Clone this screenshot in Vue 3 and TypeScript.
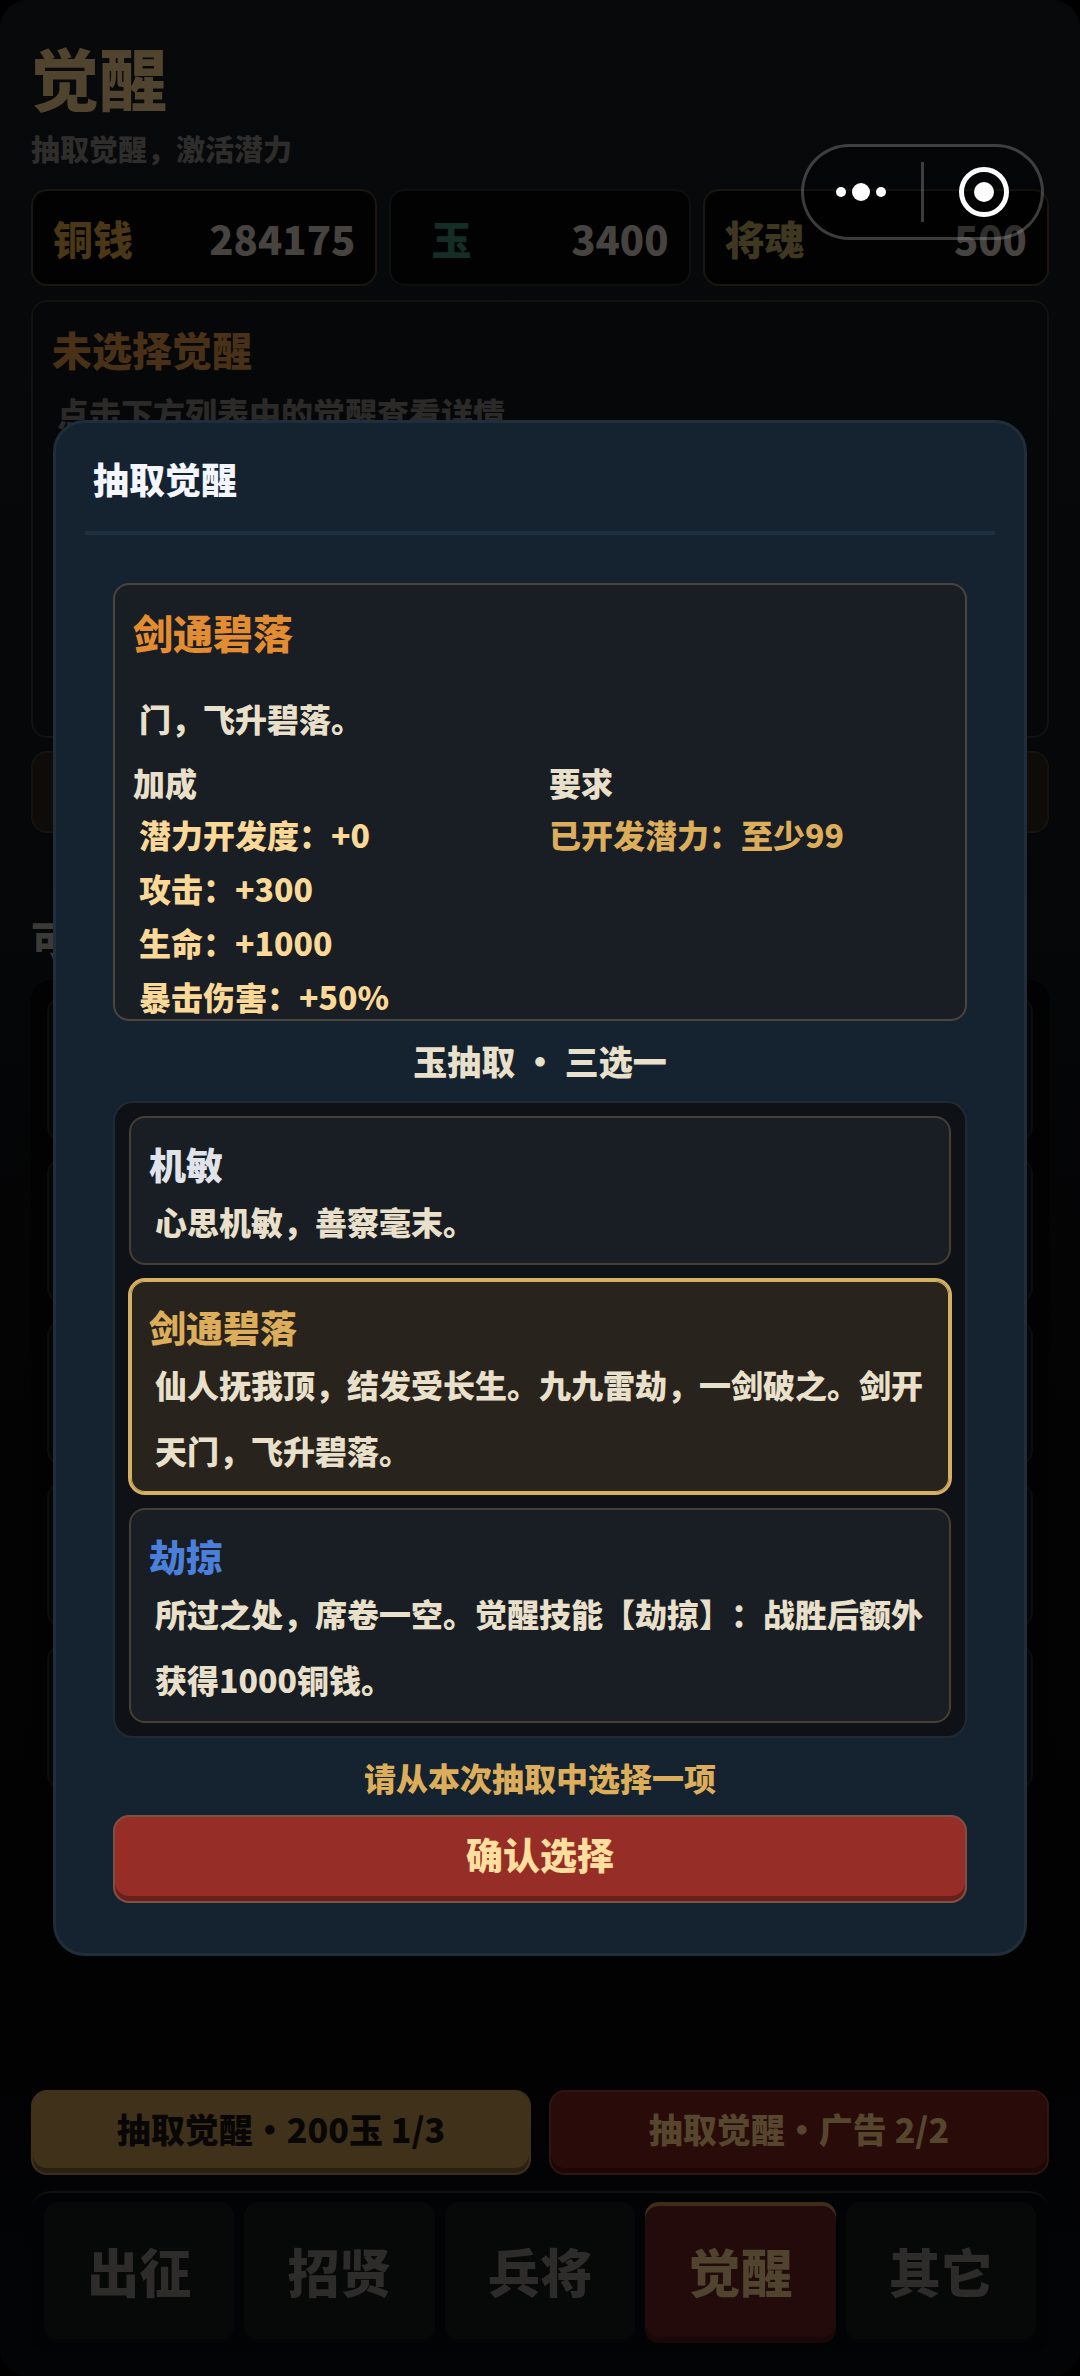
<script setup lang="ts">
import { ref } from 'vue'

interface Resource {
  name: string
  value: number
  tone: string
}

interface Choice {
  id: number
  name: string
  text: string
  tone: string
}

const resources: Resource[] = [
  { name: '铜钱', value: 284175, tone: 'copper' },
  { name: '玉', value: 3400, tone: 'jade' },
  { name: '将魂', value: 500, tone: 'soul' },
]

const choices: Choice[] = [
  { id: 1, name: '机敏', text: '心思机敏，善察毫末。', tone: 'common' },
  { id: 2, name: '剑通碧落', text: '仙人抚我顶，结发受长生。九九雷劫，一剑破之。剑开天门，飞升碧落。', tone: 'legend' },
  { id: 3, name: '劫掠', text: '所过之处，席卷一空。觉醒技能【劫掠】：战胜后额外获得1000铜钱。', tone: 'rare' },
]

const bonuses = ['潜力开发度：+0', '攻击：+300', '生命：+1000', '暴击伤害：+50%']
const tabs = ['出征', '招贤', '兵将', '觉醒', '其它']

const selected = ref(2)
const activeTab = ref('觉醒')
</script>

<template>
  <div class="app">
    <main class="page">
      <h1 class="page-title">觉醒</h1>
      <p class="page-sub">抽取觉醒，激活潜力</p>

      <section class="resources">
        <div v-for="r in resources" :key="r.name" class="resource" :class="r.tone">
          <span class="resource-name">{{ r.name }}</span>
          <span class="resource-value">{{ r.value }}</span>
        </div>
      </section>

      <section class="summary">
        <h2>未选择觉醒</h2>
        <p>点击下方列表中的觉醒查看详情</p>
      </section>
      <div class="strip"></div>

      <h2 class="list-title">可</h2>
      <section class="list">
        <div v-for="n in 5" :key="n" class="list-row"></div>
      </section>

      <div class="actions">
        <button type="button" class="action gold">抽取觉醒・200玉 1/3</button>
        <button type="button" class="action red">抽取觉醒・广告 2/2</button>
      </div>

      <nav class="tabs">
        <button
          v-for="t in tabs"
          :key="t"
          type="button"
          class="tab"
          :class="{ active: t === activeTab }"
          @click="activeTab = t"
        >{{ t }}</button>
      </nav>
    </main>

    <div class="overlay">
      <section class="modal" role="dialog" aria-labelledby="modal-title">
        <header class="modal-head">
          <h2 id="modal-title">抽取觉醒</h2>
        </header>
        <div class="modal-body">
          <article class="detail">
            <h3>剑通碧落</h3>
            <p class="detail-text">门，飞升碧落。</p>
            <div class="detail-cols">
              <div>
                <h4>加成</h4>
                <ul class="bonus">
                  <li v-for="b in bonuses" :key="b">{{ b }}</li>
                </ul>
              </div>
              <div>
                <h4>要求</h4>
                <ul class="need">
                  <li>已开发潜力：至少99</li>
                </ul>
              </div>
            </div>
          </article>

          <p class="draw-title">玉抽取 ・ 三选一</p>

          <div class="choices">
            <button
              v-for="c in choices"
              :key="c.id"
              type="button"
              class="choice"
              :class="{ selected: c.id === selected }"
              @click="selected = c.id"
            >
              <span class="choice-name" :class="c.tone">{{ c.name }}</span>
              <span class="choice-text">{{ c.text }}</span>
            </button>
          </div>

          <p class="prompt">请从本次抽取中选择一项</p>
          <button type="button" class="confirm">确认选择</button>
        </div>
      </section>
    </div>

    <div class="capsule">
      <button type="button" aria-label="更多">
        <svg width="60" height="60" viewBox="0 0 60 60" fill="#fff">
          <circle cx="10" cy="30" r="5" />
          <circle cx="30" cy="30" r="9" />
          <circle cx="50" cy="30" r="5" />
        </svg>
      </button>
      <i class="capsule-line"></i>
      <button type="button" aria-label="关闭">
        <svg width="60" height="60" viewBox="0 0 60 60">
          <circle cx="30" cy="30" r="22.5" fill="none" stroke="#fff" stroke-width="5" />
          <circle cx="30" cy="30" r="10" fill="#fff" />
        </svg>
      </button>
    </div>
  </div>
</template>

<style>
body {
  margin: 0;
  background: #000;
}
</style>

<style scoped>
.app {
  position: relative;
  min-height: 100vh;
  font-family: "Noto Sans CJK SC", "Noto Sans", sans-serif;
  font-weight: 900;
  text-spacing-trim: space-all;
  color: #e9e0cb;
}

h1, h2, h3, h4, p, ul {
  margin: 0;
  padding: 0;
  font-weight: 900;
  list-style: none;
}

button {
  margin: 0;
  padding: 0;
  border: 0;
  background: none;
  font: inherit;
  color: inherit;
  cursor: pointer;
}

.page {
  box-sizing: border-box;
  display: flex;
  flex-direction: column;
  min-height: 100vh;
  padding: 37px 31px 23px;
  border-radius: 28px;
  background: linear-gradient(#08090b 0, #06080a 15%, #060708 35%, #030304 60%, #020203 85%, #030406 100%);
}

.page-title {
  font-size: 68px;
  line-height: 80px;
  color: #50442e;
}

.page-sub {
  margin-top: 11px;
  font-size: 29px;
  line-height: 40px;
  color: #2e2d2b;
}

.resources {
  display: grid;
  grid-template-columns: 1.15fr 1fr 1.15fr;
  gap: 12px;
  margin-top: 21px;
}

.resource {
  box-sizing: border-box;
  display: flex;
  align-items: center;
  justify-content: space-between;
  height: 97px;
  padding: 0 20px;
  border: 2px solid #1b1710;
  border-radius: 16px;
  background: #020202;
  font-size: 40px;
  line-height: 48px;
}

.resource-name {
  width: 80px;
  text-align: center;
}

.resource-value {
  color: #464340;
}

.copper .resource-name {
  color: #493716;
}

.jade {
  border-color: #0b100f;
}

.jade .resource-name {
  color: #142e26;
}

.soul .resource-name {
  color: #403721;
}

.summary {
  box-sizing: border-box;
  height: 438px;
  margin-top: 14px;
  padding: 23px 19px;
  border: 2px solid #12120f;
  border-radius: 16px;
  background: #060709;
}

.summary h2 {
  font-size: 40px;
  line-height: 48px;
  color: #493117;
}

.summary p {
  margin-top: 15px;
  padding-left: 5px;
  font-size: 32px;
  line-height: 48px;
  color: #2c2a28;
}

.strip {
  box-sizing: border-box;
  height: 82px;
  margin-top: 13px;
  border: 2px solid #17120e;
  border-radius: 16px;
  background: #0e0b09;
}

.list-title {
  margin-top: 81px;
  font-size: 40px;
  line-height: 48px;
  color: #3c3a36;
}

.list {
  display: flex;
  flex: 1;
  flex-direction: column;
  gap: 16px;
  margin-top: 18px;
  padding: 16px;
  border-radius: 20px;
  background: #020203;
}

.list-row {
  box-sizing: border-box;
  height: 146px;
  border: 2px solid #0c0c0a;
  border-radius: 16px;
  background: #040506;
}

.actions {
  display: grid;
  grid-template-columns: 1fr 1fr;
  gap: 18px;
  margin-top: 14px;
}

.action {
  height: 85px;
  padding-bottom: 8px;
  border: 2px solid #40311a;
  border-radius: 16px;
  font-size: 34px;
  line-height: 48px;
}

.action.gold {
  border-bottom-color: #3c2e1f;
  background: #40311a;
  box-shadow: inset 0 -5px #2c2111;
  color: #080706;
}

.action.red {
  border-color: #2f1611;
  background: #290c09;
  box-shadow: inset 0 -5px #1e0806;
  color: #57462e;
}

.tabs {
  display: grid;
  grid-template-columns: repeat(5, 1fr);
  gap: 10px;
  margin-top: 16px;
  padding: 9px 13px 10px;
  border-top: 2px solid #15120d;
  border-radius: 20px;
  background: #020304;
}

.tab {
  height: 141px;
  padding-bottom: 4px;
  border-radius: 14px;
  background: #070908;
  box-shadow: inset 0 -4px #040606;
  font-size: 52px;
  line-height: 64px;
  color: #2d2c2a;
}

.tab.active {
  background: #230b0b;
  box-shadow: inset 0 4px #3f2d1a, inset 0 -6px #1a0809;
  color: #50442e;
}

.overlay {
  position: absolute;
  inset: 0;
  display: flex;
  align-items: center;
  padding: 0 53px;
}

.modal {
  flex: 1;
  border: 3px solid #1f2e3a;
  border-radius: 32px;
  background: #152330;
}

.modal-head {
  margin: 0 29px;
  padding: 31px 8px 29px;
  border-bottom: 4px solid #1e2f3f;
}

.modal-head h2 {
  font-size: 36px;
  line-height: 48px;
  color: #f3f6ff;
}

.modal-body {
  padding: 48px 57px 50px;
}

.detail {
  box-sizing: border-box;
  height: 438px;
  padding: 23px 18px 0;
  overflow: hidden;
  border: 2px solid #4a453e;
  border-radius: 16px;
  background: #191d24;
}

.detail h3 {
  font-size: 40px;
  line-height: 48px;
  color: #e28d32;
}

.detail-text {
  margin-top: 29px;
  padding-left: 6px;
  font-size: 32px;
  line-height: 66px;
}

.detail-cols {
  display: grid;
  grid-template-columns: 1fr 1fr;
  gap: 18px;
  margin-top: 6px;
}

.detail h4 {
  font-size: 32px;
  line-height: 50px;
}

.detail li {
  font-size: 32px;
  line-height: 54px;
}

.bonus {
  padding-left: 6px;
  color: #fad998;
}

.need {
  color: #dcae5b;
}

.draw-title {
  padding: 16px 0;
  font-size: 34px;
  line-height: 48px;
  text-align: center;
}

.choices {
  display: flex;
  flex-direction: column;
  gap: 14px;
  padding: 13px 14px;
  border: 2px solid #202a34;
  border-radius: 20px;
  background: #0e1115;
}

.choice {
  display: block;
  padding: 22px 18px 9px;
  border: 2px solid #453f35;
  border-radius: 16px;
  background: #191d24;
  text-align: left;
}

.choice.selected {
  border-color: #d6b062;
  background: #29231e;
  box-shadow: 0 0 0 1px #d6b062, inset 0 0 0 1px #d6b062;
}

.choice-name {
  display: block;
  font-size: 37px;
  line-height: 48px;
}

.choice-name.common {
  color: #e0e4ea;
}

.choice-name.legend {
  color: #dcae5b;
}

.choice-name.rare {
  color: #4a80da;
}

.choice-text {
  display: block;
  padding-left: 6px;
  font-size: 32px;
  line-height: 66px;
}

.prompt {
  padding: 15px 0 14px;
  font-size: 32px;
  line-height: 48px;
  text-align: center;
  color: #dcae5b;
}

.confirm {
  display: block;
  width: 100%;
  height: 88px;
  padding-bottom: 10px;
  border: 2px solid #7e5242;
  border-radius: 16px;
  background: #962d26;
  box-shadow: inset 0 -5px #69201b;
  font-size: 37px;
  line-height: 48px;
  color: #ffdf9f;
}

.capsule {
  position: absolute;
  top: 144px;
  right: 36px;
  display: flex;
  align-items: center;
  gap: 3px;
  box-sizing: border-box;
  width: 243px;
  height: 96px;
  border: 3px solid rgba(255, 255, 255, 0.23);
  border-radius: 48px;
  background: rgba(0, 0, 0, 0.3);
}

.capsule button {
  display: flex;
  flex: 1;
  justify-content: center;
}

.capsule-line {
  width: 3px;
  height: 60px;
  background: rgba(255, 255, 255, 0.23);
}
</style>
